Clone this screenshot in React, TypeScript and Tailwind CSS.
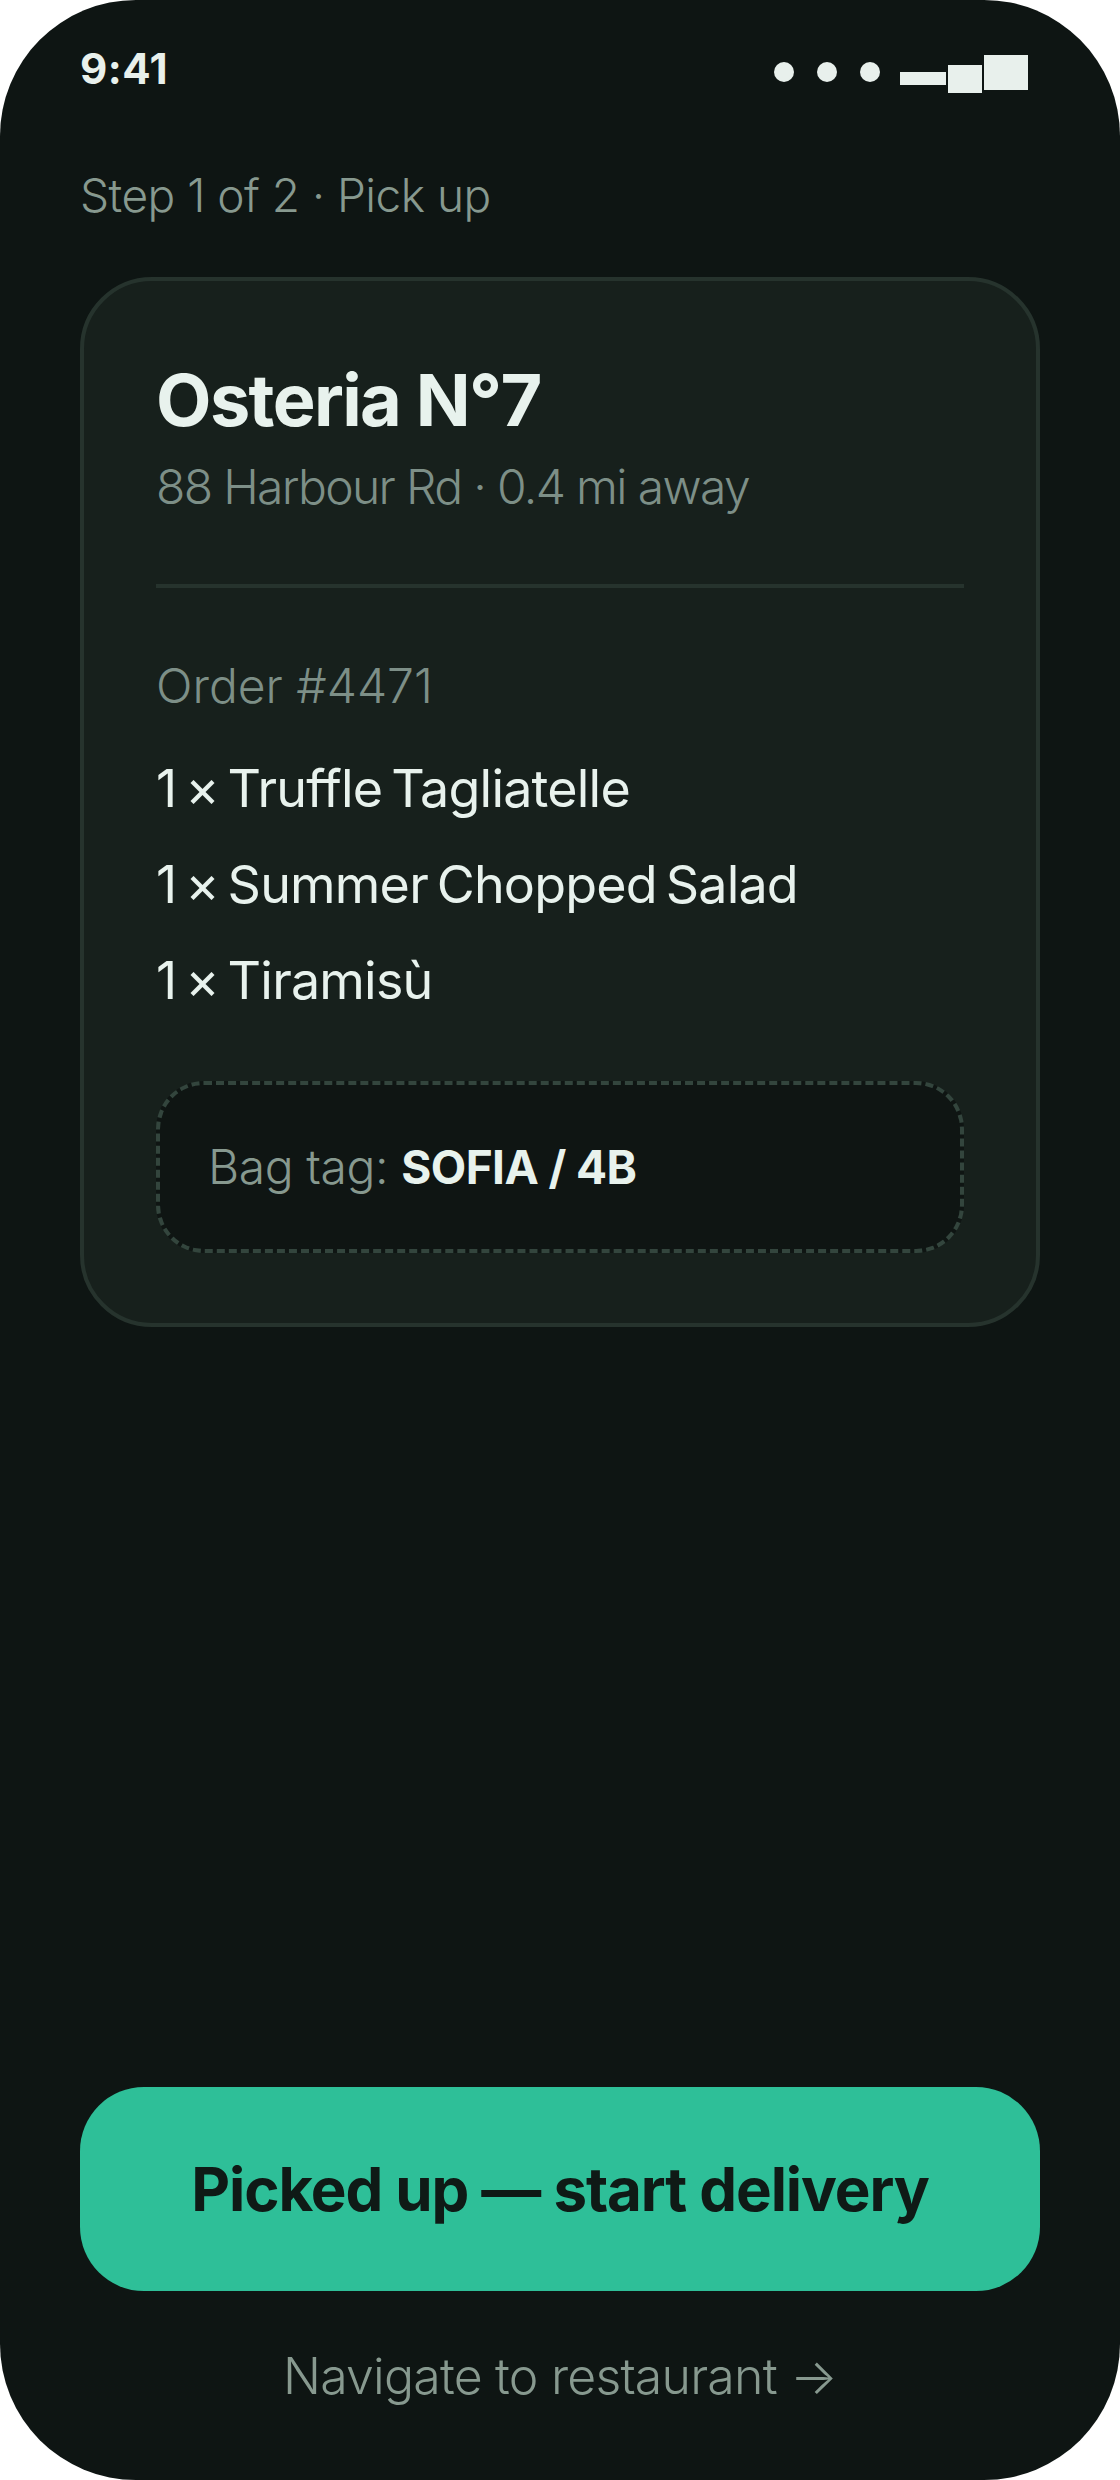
const body = "font-['Inter','Liberation_Sans',sans-serif]"

const ITEMS = ['1 × Truffle Tagliatelle', '1 × Summer Chopped Salad', '1 × Tiramisù']

function StatusIcons() {
  return (
    <div className="flex items-start">
      <div className="mt-[7px] flex gap-[23px]">
        <span className="h-[20px] w-[20px] rounded-full bg-[#e8f0ec]" />
        <span className="h-[20px] w-[20px] rounded-full bg-[#e8f0ec]" />
        <span className="h-[20px] w-[20px] rounded-full bg-[#e8f0ec]" />
      </div>
      <span className="ml-[20px] mt-[17px] h-[13px] w-[46px] bg-[#e8f0ec]" />
      <span className="ml-[2px] mt-[10px] h-[28px] w-[34px] bg-[#e8f0ec]" />
      <span className="ml-[2px] h-[35px] w-[44px] bg-[#e8f0ec]" />
    </div>
  )
}

export default function App() {
  return (
    <div className="h-[2480px] w-[1120px] bg-white">
      <div className={`flex h-full flex-col rounded-[136px] bg-[#0e1513] px-[80px] ${body}`}>
        <div className="flex items-start justify-between pr-[12px] pt-[55px]">
          <span className="-mt-[6px] text-[42px] font-bold leading-[40px] tracking-[0.5px] text-[#e8f0ec]">9:41</span>
          <StatusIcons />
        </div>

        <div className="mt-[72px] text-[46px] font-light leading-[60px] tracking-[-0.5px] text-[#87998f]">Step 1 of 2 · Pick up</div>

        <div className="mt-[52px] rounded-[72px] border-[4px] border-[#26332d] bg-[#17201c] px-[72px] pb-[70px] pt-[75px]">
          <h1 className="text-[72px] font-bold leading-[88px] tracking-[-1.6px] text-[#e8f2ed]">Osteria N°7</h1>
          <p className="mt-[11px] text-[48px] font-light leading-[64px] tracking-[-1.65px] text-[#7d8f87]">88 Harbour Rd · 0.4 mi away</p>

          <div className="mt-[65px] h-[4px] bg-[#26332d]" />

          <p className="mt-[68px] text-[48px] font-light leading-[60px] text-[#7d8f87]">Order #4471</p>
          <ul className="mt-[37px] flex flex-col gap-[24px]">
            {ITEMS.map(item => (
              <li key={item} className="text-[52px] font-normal leading-[72px] tracking-[-0.8px] [word-spacing:-5px] text-[#e8f2ed]">{item}</li>
            ))}
          </ul>

          <div className="mt-[64px] rounded-[48px] border-[4px] border-dashed border-[#33453d] bg-[#0f1513] px-[48px] py-[50px]">
            <span className="text-[48px] font-light leading-[64px] tracking-[-0.4px] text-[#87998f]">Bag tag: </span>
            <span className="text-[46px] font-bold leading-[64px] tracking-[-0.6px] text-[#e8f2ed]">SOFIA / 4B</span>
          </div>
        </div>

        <div className="mt-auto flex h-[204px] items-center justify-center rounded-[64px] bg-[#2ebf98]">
          <span className="text-[60px] font-bold leading-[80px] tracking-[-1.1px] text-[#0f1a16]">Picked up — start delivery</span>
        </div>
        <div className="mb-[72px] mt-[53px] text-center text-[50px] font-light leading-[64px] tracking-[-0.8px] text-[#87998f]">Navigate to restaurant →</div>
      </div>
    </div>
  )
}
